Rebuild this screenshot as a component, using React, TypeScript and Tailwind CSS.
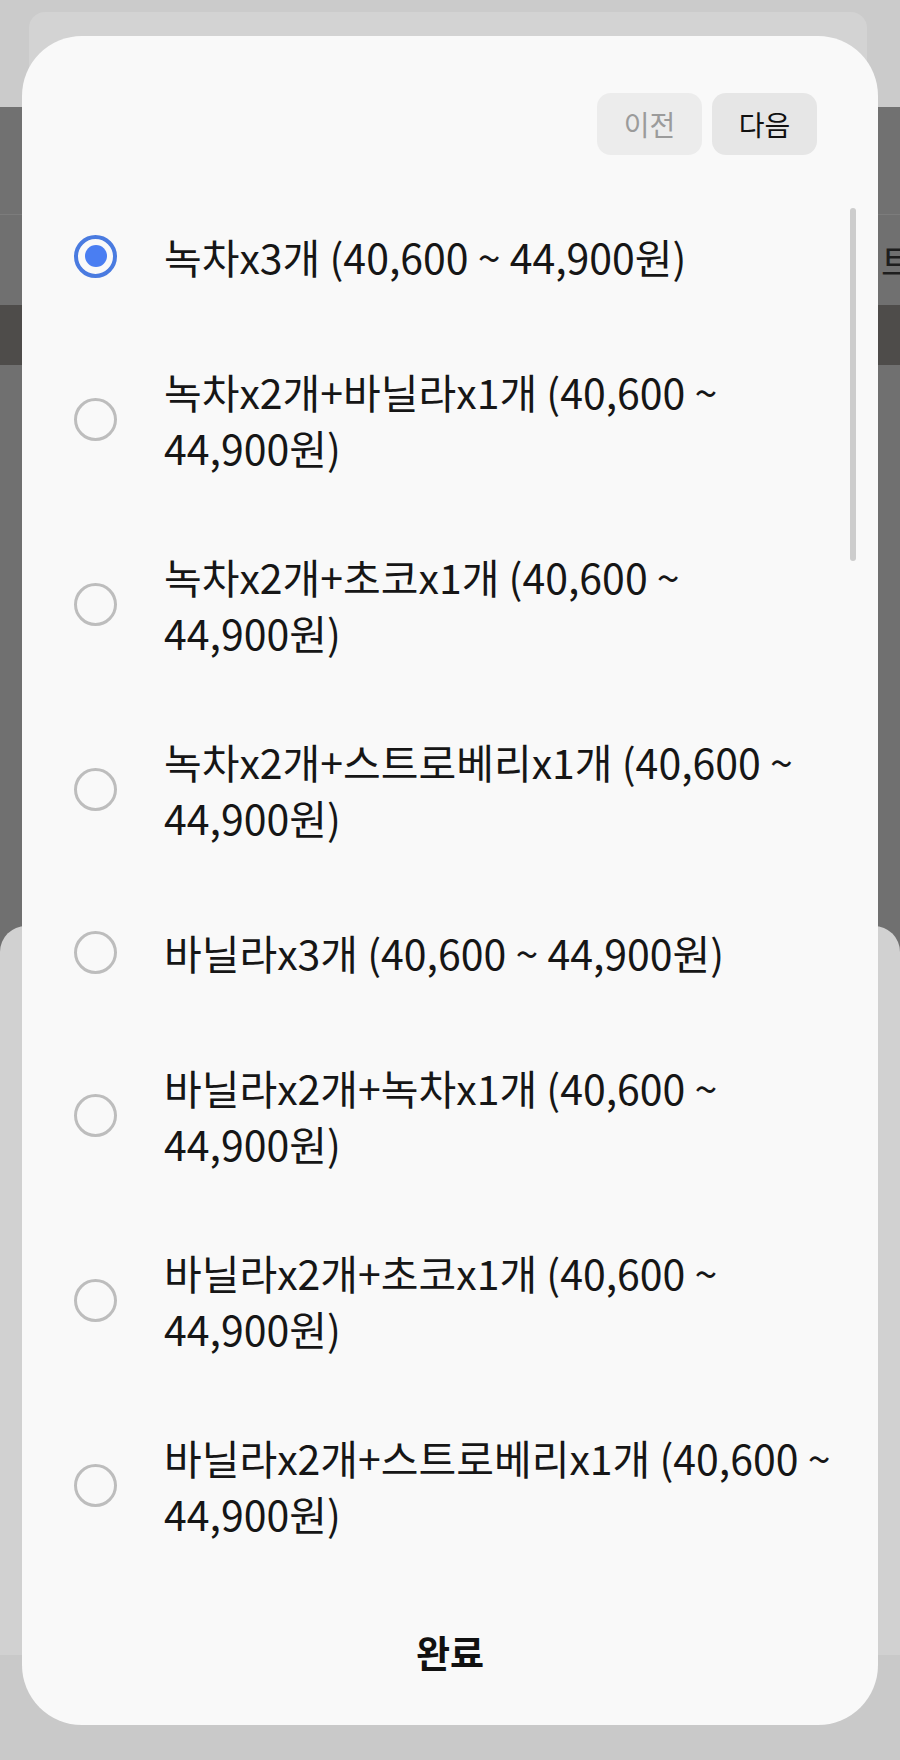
import { useState } from 'react';

// 옵션 선택 다이얼로그 — 뒤쪽 화면은 딤 처리된 상태로 깔려 있음
const OPTIONS = [
  '녹차x3개 (40,600 ~ 44,900원)',
  '녹차x2개+바닐라x1개 (40,600 ~ 44,900원)',
  '녹차x2개+초코x1개 (40,600 ~ 44,900원)',
  '녹차x2개+스트로베리x1개 (40,600 ~ 44,900원)',
  '바닐라x3개 (40,600 ~ 44,900원)',
  '바닐라x2개+녹차x1개 (40,600 ~ 44,900원)',
  '바닐라x2개+초코x1개 (40,600 ~ 44,900원)',
  '바닐라x2개+스트로베리x1개 (40,600 ~ 44,900원)',
];

const FONT = { fontFamily: '"Noto Sans CJK KR", "Noto Sans", sans-serif' };

function Radio({ checked }: { checked: boolean }) {
  if (checked) {
    return (
      <span className="flex h-[43px] w-[43px] shrink-0 items-center justify-center rounded-full border-[4px] border-[#4a7be0]">
        <span className="h-[22px] w-[22px] rounded-full bg-[#4a7ef2]" />
      </span>
    );
  }
  return <span className="h-[43px] w-[43px] shrink-0 rounded-full border-[3px] border-[#bdbdbd]" />;
}

function Backdrop() {
  return (
    <div className="flex h-[1760px] flex-col bg-[#cbcbcb]">
      {/* 상단 카드 (대부분 다이얼로그에 가려짐) */}
      <div className="h-[107px] px-[29px] pt-[12px] pr-[33px]">
        <div className="flex h-full items-start justify-between rounded-t-[16px] bg-[#d3d3d3] pl-[52px] pr-[46px] pt-[22px]">
          <span className="mt-[10px] h-[4px] w-[4px] rounded-full bg-[#555]" />
          <div className="flex items-start gap-[40px]">
            <span className="mt-[7px] h-[38px] w-[38px] rounded-full bg-[#4a86c8]" />
            <span className="text-[22px] leading-none text-[#111]">›</span>
          </div>
        </div>
      </div>
      <div className="h-[108px] border-b border-[#7c7c7c] bg-[#717171]" />
      <div className="flex h-[90px] items-center justify-end bg-[#707070]">
        <span className="-mr-[14px] text-[36px] leading-none text-[#1e1e1e]" style={FONT}>트</span>
      </div>
      <div className="h-[60px] bg-[#4e4c4a]" />
      <div className="h-[35px] bg-[#707070]" />
      <div className="flex-1 bg-[#707070]">
        <div className="mt-[526px] h-[729px] rounded-t-[26px] bg-[#d1d1d1]" />
        <div className="h-[105px] bg-[#c9c9c9]" />
      </div>
    </div>
  );
}

export default function App() {
  const [selected, setSelected] = useState(0);

  return (
    <div className="relative h-[1760px] w-[900px] overflow-hidden" style={FONT}>
      <Backdrop />

      <div className="absolute left-[22px] top-[36px] flex h-[1689px] w-[856px] flex-col rounded-[60px] bg-[#f9f9f9]">
        <div className="flex justify-end gap-[10px] pr-[61px] pt-[57px]">
          <button className="h-[62px] w-[105px] rounded-[14px] bg-[#ececec] text-[28px] text-[#9b9b9b]">이전</button>
          <button className="h-[62px] w-[105px] rounded-[14px] bg-[#e6e6e6] text-[28px] text-[#111]">다음</button>
        </div>

        <div className="mt-[30px] flex flex-col">
          {OPTIONS.map((label, i) => (
            <button
              key={label}
              onClick={() => setSelected(i)}
              className="flex min-h-[141px] items-center gap-[47px] pb-[36px] pl-[52px] pt-[37px] text-left"
            >
              <Radio checked={selected === i} />
              <span className="w-[680px] break-keep text-[41px] leading-[56px] text-[#161616]">{label}</span>
            </button>
          ))}
        </div>

        <div className="flex flex-1 items-center justify-center pt-[3px]">
          <button className="text-[37px] font-bold text-[#111]">완료</button>
        </div>

        <div className="absolute right-[22px] top-[172px] h-[353px] w-[6px] rounded-full bg-[#cdcdcd]" />
      </div>
    </div>
  );
}
